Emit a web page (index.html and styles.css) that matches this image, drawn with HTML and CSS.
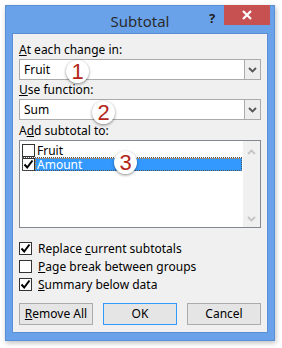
FILE: index.html
```html
<!DOCTYPE html>
<html>
<head>
<meta charset="utf-8">
<link rel="stylesheet" href="styles.css">
</head>
<body>
<div class="dialog">
  <div class="titlebar">
    <div class="title">Subtotal</div>
    <div class="help">?</div>
    <div class="close"><svg width="12" height="12" viewBox="0 0 12 12"><path d="M2 2 L10 10 M10 2 L2 10" stroke="#fff" stroke-width="2.2"/></svg></div>
  </div>
  <div class="panel">
    <div class="label lbl1"><u>A</u>t each change in:</div>
    <div class="combo">
      <div class="combo-text">Fruit</div>
      <div class="combo-btn"><svg width="9" height="6" viewBox="0 0 9 6"><path d="M1 1 L4.5 4.5 L8 1" fill="none" stroke="#555" stroke-width="1.8"/></svg></div>
      <div class="badge b1">1</div>
    </div>
    <div class="label lbl2"><u>U</u>se function:</div>
    <div class="combo">
      <div class="combo-text">Sum</div>
      <div class="combo-btn"><svg width="9" height="6" viewBox="0 0 9 6"><path d="M1 1 L4.5 4.5 L8 1" fill="none" stroke="#555" stroke-width="1.8"/></svg></div>
      <div class="badge b2">2</div>
    </div>
    <div class="label lbl3">A<u>d</u>d subtotal to:</div>
    <div class="listbox">
      <div class="items">
        <div class="item"><span class="cb"></span><span class="itext">Fruit</span></div>
        <div class="item focused"><span class="cb"><svg width="11" height="11" viewBox="0 0 11 11"><path d="M1.5 5.5 L4.2 8.5 L9.5 1.5" fill="none" stroke="#000" stroke-width="2"/></svg></span><span class="itext sel">Amount</span></div>
        <div class="badge b3">3</div>
      </div>
      <div class="scroll">
        <svg width="9" height="6" viewBox="0 0 9 6"><path d="M1 5 L4.5 1.5 L8 5" fill="none" stroke="#c4c4c4" stroke-width="1.8"/></svg>
        <svg width="9" height="6" viewBox="0 0 9 6"><path d="M1 1 L4.5 4.5 L8 1" fill="none" stroke="#c4c4c4" stroke-width="1.8"/></svg>
      </div>
    </div>
    <div class="checks">
      <div class="check"><span class="cb"><svg width="11" height="11" viewBox="0 0 11 11"><path d="M1.5 5.5 L4.2 8.5 L9.5 1.5" fill="none" stroke="#000" stroke-width="2"/></svg></span><span>Replace <u>c</u>urrent subtotals</span></div>
      <div class="check"><span class="cb"></span><span><u>P</u>age break between groups</span></div>
      <div class="check"><span class="cb"><svg width="11" height="11" viewBox="0 0 11 11"><path d="M1.5 5.5 L4.2 8.5 L9.5 1.5" fill="none" stroke="#000" stroke-width="2"/></svg></span><span><u>S</u>ummary below data</span></div>
    </div>
    <div class="buttons">
      <div class="btn"><u>R</u>emove All</div>
      <div class="btn default">OK</div>
      <div class="btn">Cancel</div>
    </div>
  </div>
</div>
</body>
</html>
```
FILE: styles.css
```css
* { box-sizing: border-box; }
html, body { margin: 0; padding: 0; }
body {
  width: 282px; height: 348px; background: #fff; overflow: hidden;
  font-family: "Noto Sans", "Open Sans", sans-serif; font-size: 12px; color: #000;
}
.dialog {
  margin: 5px 0 0 5px; width: 270px; height: 336px;
  background: #6aa2ea; border: 1px solid #5a8fd8;
  box-shadow: 1px 2px 5px rgba(0,0,0,0.25);
  display: flex; flex-direction: column;
}
.titlebar { height: 27px; position: relative; flex: none; }
.title {
  text-align: center; font-size: 15px; color: #2b2b2b; line-height: 28px; padding-top: 1px;
}
.help {
  position: absolute; left: 203px; top: 3px; font-weight: bold; font-size: 13px; color: #222;
}
.close {
  position: absolute; left: 218px; top: -1px; width: 46px; height: 20px; background: #c75050;
  display: flex; align-items: center; justify-content: center;
}
.panel {
  flex: 1; margin: 0 6px 7px 6px; background: #f0f0f0; border: 1px solid #5a8fd8;
  padding: 0 6px; display: flex; flex-direction: column;
}
.label { line-height: 16px; height: 16px; }
.lbl1 { margin-top: 8px; }
.lbl2 { margin-top: 2px; }
.lbl3 { margin-top: 3px; }
u { text-decoration: underline; text-underline-offset: 1px; }
.combo {
  margin-top: 1px; height: 21px; background: #fff; border: 1px solid #ababab;
  display: flex; position: relative;
}
.combo-text { flex: 1; padding-left: 4px; line-height: 19px; }
.combo-btn {
  width: 16px; border-left: 1px solid #ababab; background: #ededed;
  display: flex; align-items: center; justify-content: center;
}
.badge {
  position: absolute; width: 23px; height: 23px; border-radius: 50%;
  background: #fff; color: #b3261a; font-size: 22px; line-height: 23px; text-align: center;
  box-shadow: 0 1px 3px rgba(0,0,0,0.45);
  font-family: "Liberation Sans", "Noto Sans", sans-serif;
}
.b1 { left: 46px; top: 0px; }
.b2 { left: 72px; top: 1px; }
.b3 { left: 94px; top: 10px; }
.listbox {
  margin-top: 1px; height: 88px; background: #fff; border: 1px solid #828790;
  display: flex;
}
.items { flex: 1; padding: 2px 1px 0 2px; position: relative; }
.item { display: flex; align-items: center; height: 14px; }
.item.focused { outline: 1px dotted #555; outline-offset: -1px; }
.cb {
  width: 13px; height: 13px; border: 1px solid #333; background: #fff; flex: none;
  display: inline-flex; align-items: center; justify-content: center;
}
.itext { padding-left: 2px; line-height: 13px; flex: 1; height: 13px; display: flex; align-items: center; }
.itext.sel { background: #3399ff; color: #fff; outline: 1px dotted #e08020; outline-offset: -1px; }
.scroll {
  width: 17px; background: #f0f0f0; display: flex; flex-direction: column;
  justify-content: space-between; align-items: center; padding: 8px 0 5px 0;
}
.checks { margin-top: 13px; display: flex; flex-direction: column; gap: 4px; }
.check { display: flex; align-items: center; height: 14px; }
.check .cb { margin-right: 6px; }
.buttons { margin-top: 12px; display: flex; gap: 10px; }
.btn {
  width: 74px; height: 22px; border: 1px solid #acacac; background: #e5e5e5;
  text-align: center; line-height: 20px;
}
.btn.default { border-color: #3399ff; }
```
